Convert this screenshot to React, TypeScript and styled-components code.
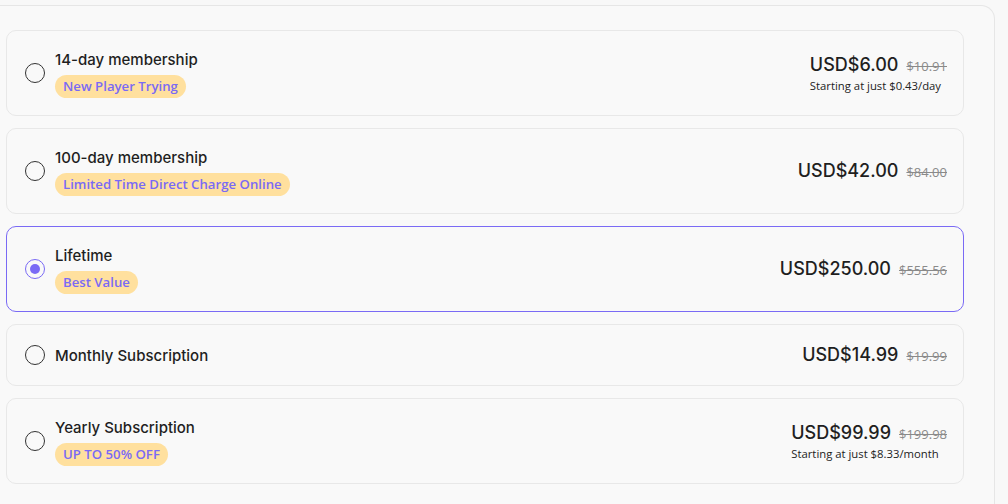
import React from 'react';
import styled, { createGlobalStyle } from 'styled-components';

type Plan = {
    id: string;
    title: string;
    badge?: string;
    price: string;
    was: string;
    per?: string;
};

const PLANS: Plan[] = [
    { id: 'd14', title: '14-day membership', badge: 'New Player Trying', price: 'USD$6.00', was: '$10.91', per: 'Starting at just $0.43/day' },
    { id: 'd100', title: '100-day membership', badge: 'Limited Time Direct Charge Online', price: 'USD$42.00', was: '$84.00' },
    { id: 'life', title: 'Lifetime', badge: 'Best Value', price: 'USD$250.00', was: '$555.56' },
    { id: 'month', title: 'Monthly Subscription', price: 'USD$14.99', was: '$19.99' },
    { id: 'year', title: 'Yearly Subscription', badge: 'UP TO 50% OFF', price: 'USD$99.99', was: '$199.98', per: 'Starting at just $8.33/month' },
];

const GlobalStyle = createGlobalStyle`
    html, body {
        margin: 0;
        background: #f8f8f8;
        font-family: 'Open Sans', 'Noto Sans', sans-serif;
        color: #222;
        overflow: hidden;
    }
`;

const App: React.FC = () => {
    const [selected, setSelected] = React.useState('life');
    return (
        <>
            <GlobalStyle />
            <Panel>
                <List>
                    {PLANS.map(p => (
                        <Card key={p.id} active={selected === p.id} onClick={() => setSelected(p.id)}>
                            <Radio active={selected === p.id} />
                            <Info>
                                <Title>{p.title}</Title>
                                {p.badge && <Badge>{p.badge}</Badge>}
                            </Info>
                            <PriceBox>
                                <PriceRow>
                                    <Price>{p.price}</Price>
                                    <Was>{p.was}</Was>
                                </PriceRow>
                                {p.per && <Per>{p.per}</Per>}
                            </PriceBox>
                        </Card>
                    ))}
                </List>
            </Panel>
        </>
    );
};

const PURPLE = '#7a6af5';

const Panel = styled.div`
    margin-top: 5px;
    width: 964px;
    height: 520px;
    padding: 24px 24px 0 6px;
    background: #f9f9f9;
    border-top: 1px solid #e6e6e6;
    border-right: 1px solid #e6e6e6;
    border-top-right-radius: 14px;
`;

const List = styled.div`
    display: flex;
    flex-direction: column;
    gap: 12px;
    width: 958px;
`;

const Card = styled.div<{ active: boolean }>`
    display: flex;
    align-items: center;
    gap: 10px;
    padding: 17px 16px 17px 18px;
    background: #f9f9f9;
    border: 1px solid ${p => (p.active ? PURPLE : '#e8e8e8')};
    border-radius: 10px;
    cursor: pointer;
`;

const Radio = styled.span<{ active: boolean }>`
    flex: none;
    position: relative;
    width: 20px;
    height: 20px;
    box-sizing: border-box;
    border-radius: 50%;
    border: 1.5px solid ${p => (p.active ? PURPLE : '#333')};

    &::after {
        content: '';
        display: ${p => (p.active ? 'block' : 'none')};
        position: absolute;
        left: 3.5px;
        top: 3.5px;
        width: 10px;
        height: 10px;
        border-radius: 50%;
        background: ${PURPLE};
    }
`;

const Info = styled.div`
    flex: 1;
    display: flex;
    flex-direction: column;
    align-items: flex-start;
    gap: 5px;
`;

const Title = styled.div`
    font-family: Inter, 'Open Sans', sans-serif;
    font-size: 15px;
    font-weight: 500;
    line-height: 22px;
    padding-top: 1px;
    margin-bottom: -1px;
    color: #1f1f1f;
`;

const Badge = styled.span`
    padding: 0 8px;
    height: 23px;
    line-height: 23px;
    border-radius: 12px;
    background: #ffe09e;
    color: ${PURPLE};
    font-size: 13.2px;
    font-weight: 600;
`;

const PriceBox = styled.div`
    display: flex;
    flex-direction: column;
    align-items: flex-start;
`;

const PriceRow = styled.div`
    display: flex;
    align-items: baseline;
    gap: 8px;
`;

const Price = styled.span`
    font-family: Inter, 'Open Sans', sans-serif;
    font-size: 18px;
    font-weight: 500;
    line-height: 26px;
    color: #1f1f1f;
`;

const Was = styled.span`
    font-size: 13px;
    color: #8a8a8a;
    text-decoration: line-through;
`;

const Per = styled.span`
    font-size: 11.3px;
    line-height: 16px;
    color: #222;
`;

export default App;
